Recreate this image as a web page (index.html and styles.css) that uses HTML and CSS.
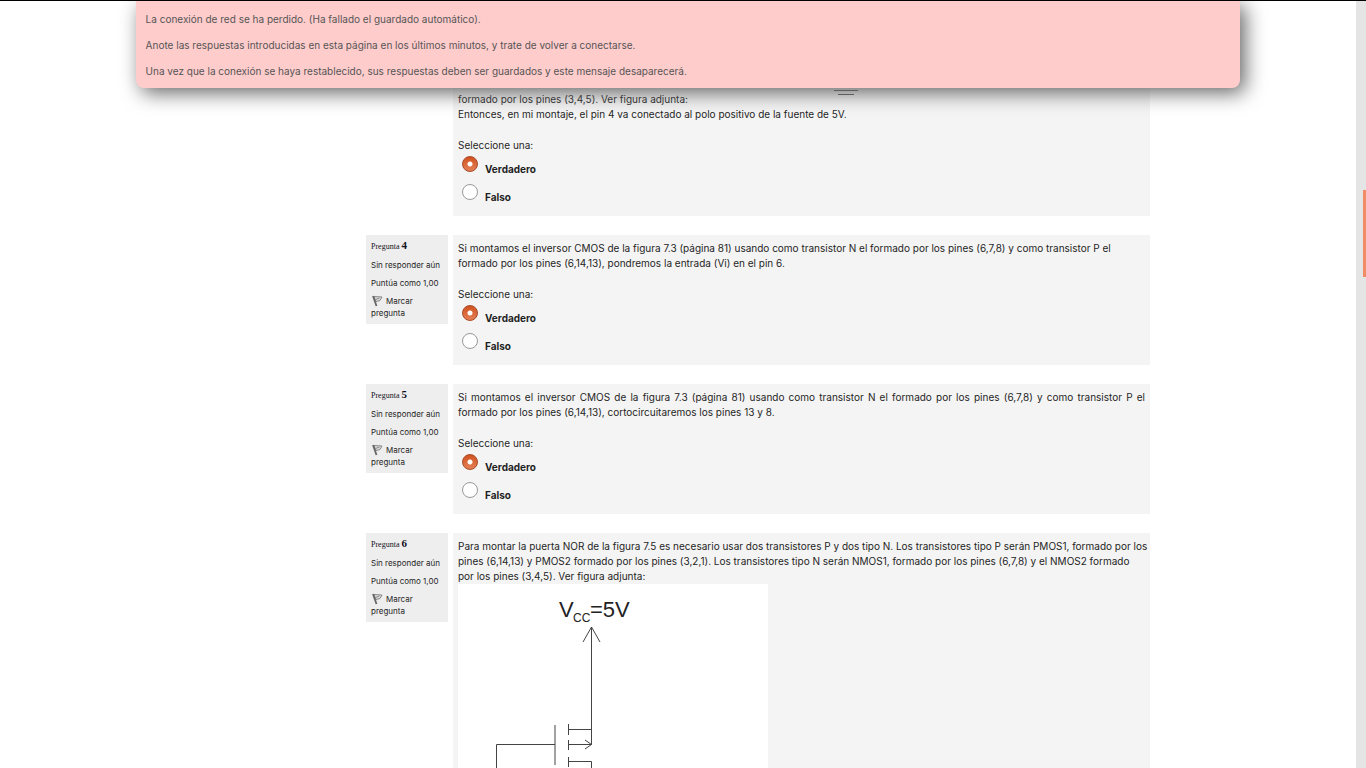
FILE: index.html
```
<!DOCTYPE html>
<html lang="es">
<head>
<meta charset="utf-8">
<title>Cuestionario</title>
<link rel="stylesheet" href="styles.css">
</head>
<body>
<svg class="defs" aria-hidden="true">
  <symbol id="flag" viewBox="0 0 12 12">
    <path d="M3 1.500 11 2 9 5.500 5 6.500Z" fill="#ddd" stroke="#888"/>
    <path d="M2 1 5.500 11" stroke="#666" stroke-width="1.800"/>
    <path d="M4.500 4.500 8.500 3" stroke="#888"/>
  </symbol>
</svg>
<div class="page">
  <div class="view">
    <div class="alert" role="alert">
      <p>La conexión de red se ha perdido. (Ha fallado el guardado automático).</p>
      <p>Anote las respuestas introducidas en esta página en los últimos minutos, y trate de volver a conectarse.</p>
      <p>Una vez que la conexión se haya restablecido, sus respuestas deben ser guardados y este mensaje desaparecerá.</p>
    </div>
    <main class="quiz">
      <section class="question">
        <div class="content">
          <svg class="ground" viewBox="0 0 687 85" aria-hidden="true">
            <path d="M376 83.500H400M380 87.500H396" stroke="#555" fill="none"/>
          </svg>
          <p>formado por los pines (3,4,5). Ver figura adjunta:</p>
          <p class="last">Entonces, en mi montaje, el pin 4 va conectado al polo positivo de la fuente de 5V.</p>
          <fieldset>
            <legend>Seleccione una:</legend>
            <label><input type="radio" name="q3" checked><span>Verdadero</span></label>
            <label><input type="radio" name="q3"><span>Falso</span></label>
          </fieldset>
        </div>
      </section>
      <section class="question">
        <aside class="info">
          <h3>Pregunta <b>4</b></h3>
          <p>Sin responder aún</p>
          <p>Puntúa como 1,00</p>
          <a href="#"><svg class="flag" aria-hidden="true"><use href="#flag"/></svg>Marcar pregunta</a>
        </aside>
        <div class="content">
          <p class="last">Si montamos el inversor CMOS de la figura 7.3 (página 81) usando como transistor N el formado por los pines (6,7,8) y como transistor P el<br>formado por los pines (6,14,13), pondremos la entrada (Vi) en el pin 6.</p>
          <fieldset>
            <legend>Seleccione una:</legend>
            <label><input type="radio" name="q4" checked><span>Verdadero</span></label>
            <label><input type="radio" name="q4"><span>Falso</span></label>
          </fieldset>
        </div>
      </section>
      <section class="question">
        <aside class="info">
          <h3>Pregunta <b>5</b></h3>
          <p>Sin responder aún</p>
          <p>Puntúa como 1,00</p>
          <a href="#"><svg class="flag" aria-hidden="true"><use href="#flag"/></svg>Marcar pregunta</a>
        </aside>
        <div class="content">
          <p class="justified">Si montamos el inversor CMOS de la figura 7.3 (página 81) usando como transistor N el formado por los pines (6,7,8) y como transistor P el</p>
          <p class="last">formado por los pines (6,14,13), cortocircuitaremos los pines 13 y 8.</p>
          <fieldset>
            <legend>Seleccione una:</legend>
            <label><input type="radio" name="q5" checked><span>Verdadero</span></label>
            <label><input type="radio" name="q5"><span>Falso</span></label>
          </fieldset>
        </div>
      </section>
      <section class="question">
        <aside class="info">
          <h3>Pregunta <b>6</b></h3>
          <p>Sin responder aún</p>
          <p>Puntúa como 1,00</p>
          <a href="#"><svg class="flag" aria-hidden="true"><use href="#flag"/></svg>Marcar pregunta</a>
        </aside>
        <div class="content">
          <p class="lines">Para montar la puerta NOR de la figura 7.5 es necesario usar dos transistores P y dos tipo N. Los transistores tipo P serán PMOS1, formado por los<br>pines (6,14,13) y PMOS2 formado por los pines (3,2,1). Los transistores tipo N serán NMOS1, formado por los pines (6,7,8) y el NMOS2 formado<br>por los pines (3,4,5). Ver figura adjunta:</p>
          <svg class="figure" width="310" height="400" viewBox="0 0 310 400" role="img" aria-label="Esquema de la puerta NOR">
            <text x="101" y="33" font-size="22">V</text>
            <text x="115" y="38" font-size="12">CC</text>
            <text x="132" y="33" font-size="22">=5V</text>
            <path d="M133.500 43V160.500M125 58 133.500 43 142 58M97 141V181M38.500 400V160.500H97M110.500 140V151M110.500 145.500H133.500M110.500 156V166M110.500 160.500H133.500M127 156 133.500 160.500 127 165M110.500 173V183M110.500 177.500H133.500V400"/>
          </svg>
        </div>
      </section>
    </main>
  </div>
  <div class="track"><div class="thumb"></div></div>
</div>
</body>
</html>
```
FILE: styles.css
```
* { box-sizing: border-box; }
body {
  margin: 0;
  background: #fff;
  color: #1f1f1f;
  font: 10px/15px Inter, "Liberation Sans", sans-serif;
}
p, h3 { margin: 0; }
.defs { position: absolute; width: 0; height: 0; }
.page {
  display: flex;
  height: 100vh;
  overflow: hidden;
  border-top: 1px solid #000;
}
.view { flex: 1; position: relative; overflow: hidden; }
.quiz {
  display: flex;
  flex-direction: column;
  gap: 19px;
  max-width: 944px;
  margin: 0 auto;
  padding-left: 160px;
}
.question {
  flex: none;
  display: grid;
  grid-template-columns: 82px minmax(0, 1fr);
  gap: 5px;
  align-items: start;
}
.content {
  grid-column: 2;
  padding: 6px 5px 8px;
  background: #f4f4f4;
}
.content p.last { margin-bottom: 16px; }
.content p.lines { white-space: nowrap; }
.content p.justified { text-align: justify; text-align-last: justify; }
.ground { display: block; width: 100%; overflow: visible; }
fieldset { margin: 0; padding: 0; border: 0; min-width: 0; }
legend { padding: 0; }
label {
  display: flex;
  align-items: flex-start;
  gap: 7px;
  height: 28px;
  padding: 3px 0 0 4px;
  font-weight: 700;
}
label + label { height: 27px; }
label span { padding-top: 6px; }
input {
  appearance: none;
  width: 16px;
  height: 16px;
  margin: 0;
  border: 1px solid #999;
  border-radius: 50%;
  background: #fff;
}
input:checked {
  border-color: #a84a24;
  background: radial-gradient(circle, #fff 0 2px, transparent 3px), linear-gradient(#d0521f, #e58058);
}
.info {
  padding: 6px 5px 5px;
  background: #eee;
  font-size: 8px;
  line-height: 12px;
  display: flex;
  flex-direction: column;
  gap: 6px;
}
.info p { white-space: nowrap; }
.info h3 {
  font: 8px/12px "Liberation Serif", serif;
  color: #112;
}
.info b { font-size: 11px; line-height: 8px; }
.info a { color: inherit; text-decoration: none; }
.flag {
  display: inline-block;
  width: 12px;
  height: 12px;
  margin: -3px 3px 0 0;
  vertical-align: -3px;
}
.figure {
  display: block;
  background: #fff;
  font-family: "Liberation Sans", sans-serif;
  fill: #222;
}
.figure path { fill: none; stroke: #444; }
.alert {
  position: absolute;
  top: 0;
  left: 10%;
  box-sizing: content-box;
  width: 80%;
  padding: 11px 10px 9px;
  display: flex;
  flex-direction: column;
  gap: 11px;
  border-radius: 0 0 8px 8px;
  background: #fcc;
  color: #555;
  box-shadow: 5px 5px 20px #666;
}
.track {
  width: 10px;
  padding: 189px 0 0 7px;
  background: #e5e5e5;
}
.thumb { height: 87px; background: #f08c66; }
```
